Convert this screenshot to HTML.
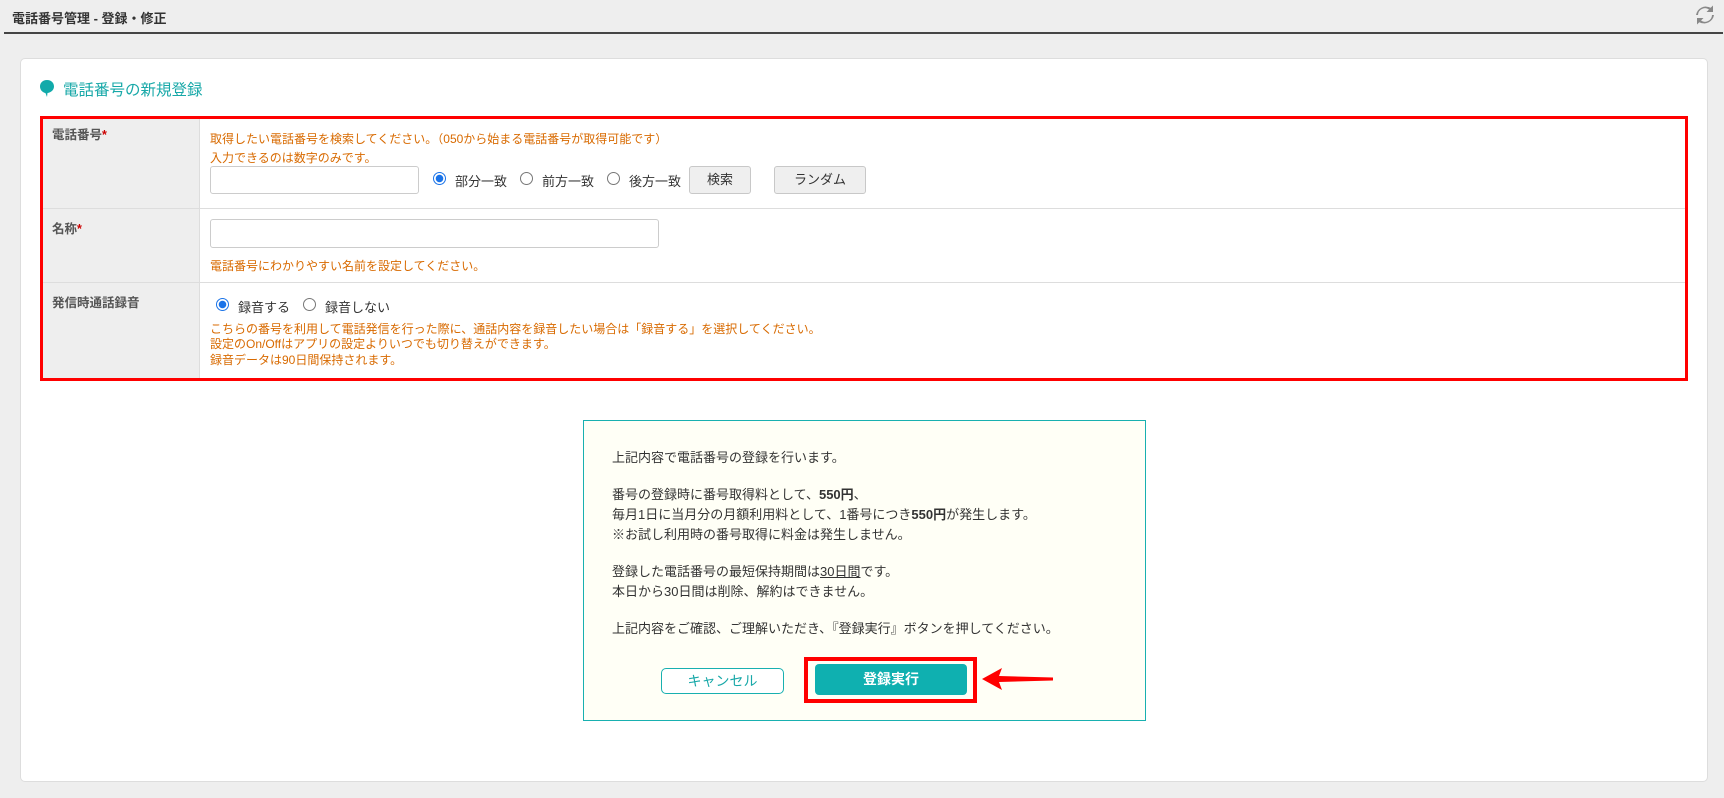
<!DOCTYPE html>
<html><head><meta charset="utf-8"><style>
body{margin:0;width:1724px;height:798px;background:#eeeeee;font-family:"Liberation Sans","Noto Sans CJK JP",sans-serif;position:relative;overflow:hidden;color:#333}
.a{position:absolute}
.t{font-size:12px;color:#333;white-space:nowrap}
.o{color:#d86a00;font-size:12px;white-space:nowrap}
.lbl{font-size:12.5px;font-weight:bold;color:#555;white-space:nowrap}
.in{border:1px solid #ccc;border-radius:3px;background:#fff;box-sizing:border-box}
.rad{width:13px;height:13px;border:1px solid #777;border-radius:50%;box-sizing:border-box;background:#fff}
.rad.on{border:1px solid #1a73e8;background:radial-gradient(circle,#1a73e8 0 3.5px,#fff 4px)}
.btn{border:1px solid #c8c8c8;border-radius:3px;background:#efefef;font-size:13px;text-align:center;box-sizing:border-box;color:#333}
.c{font-size:13px;color:#333;white-space:nowrap}
</style></head><body>
<div class="a" style="left:12px;top:8px;font-size:13px;font-weight:bold;color:#333">電話番号管理 - 登録・修正</div>
<div class="a" style="left:4px;top:32px;width:1719px;height:2px;background:#444"></div>
<svg class="a" style="left:1694px;top:3px" width="22" height="24" viewBox="0 0 22 24"><path d="M4 12a7 7 0 0 1 11-5.5l-2.5 2.5H19V2.5l-2.3 2.3A10 10 0 0 0 2 12z" fill="#888"/><path d="M18 12a7 7 0 0 1-11 5.5l2.5-2.5H3v6.5l2.3-2.3A10 10 0 0 0 20 12z" fill="#888"/></svg>
<div class="a" style="left:20px;top:58px;width:1688px;height:724px;background:#fff;border:1px solid #ddd;border-radius:5px;box-sizing:border-box"></div>
<svg class="a" style="left:39px;top:80px" width="16" height="18" viewBox="0 0 16 18"><path d="M8 0C3.6 0 1 3 1 6.5c0 3.5 2.6 6 5.5 6.6L8 17l.5-4C12 12.5 15 10 15 6.5 15 3 12.4 0 8 0z" fill="#11aaaa"/></svg>
<div class="a" style="left:63px;top:78px;font-size:15.5px;color:#17a8a8">電話番号の新規登録</div>
<div class="a" style="left:40px;top:116px;width:1648px;height:265px;border:3px solid #f00;box-sizing:border-box;background:#fff"></div>
<div class="a" style="left:43px;top:119px;width:157px;height:259px;background:#eeeeee"></div>
<div class="a" style="left:43px;top:208px;width:1642px;height:1px;background:#ddd"></div>
<div class="a" style="left:43px;top:282px;width:1642px;height:1px;background:#ddd"></div>
<div class="a" style="left:199px;top:119px;width:1px;height:259px;background:#ddd"></div>
<div class="a lbl" style="left:52px;top:124px">電話番号<span style="color:#c00">*</span></div>
<div class="a lbl" style="left:52px;top:218px">名称<span style="color:#c00">*</span></div>
<div class="a lbl" style="left:52px;top:292px">発信時通話録音</div>
<div class="a o" style="left:210px;top:130px">取得したい電話番号を検索してください。（050から始まる電話番号が取得可能です）</div>
<div class="a o" style="left:210px;top:149px">入力できるのは数字のみです。</div>
<div class="a in" style="left:210px;top:166px;width:209px;height:28px"></div>
<div class="a rad on" style="left:433px;top:172px"></div><div class="a t" style="left:455px;top:171px;font-size:13px">部分一致</div>
<div class="a rad" style="left:520px;top:172px"></div><div class="a t" style="left:542px;top:171px;font-size:13px">前方一致</div>
<div class="a rad" style="left:607px;top:172px"></div><div class="a t" style="left:629px;top:171px;font-size:13px">後方一致</div>
<div class="a btn" style="left:689px;top:166px;width:62px;height:28px;line-height:26px">検索</div>
<div class="a btn" style="left:774px;top:166px;width:92px;height:28px;line-height:26px">ランダム</div>
<div class="a in" style="left:210px;top:219px;width:449px;height:29px"></div>
<div class="a o" style="left:210px;top:257px">電話番号にわかりやすい名前を設定してください。</div>
<div class="a rad on" style="left:216px;top:298px"></div><div class="a t" style="left:238px;top:297px;font-size:13px">録音する</div>
<div class="a rad" style="left:303px;top:298px"></div><div class="a t" style="left:325px;top:297px;font-size:13px">録音しない</div>
<div class="a o" style="left:210px;top:320px">こちらの番号を利用して電話発信を行った際に、通話内容を録音したい場合は「録音する」を選択してください。</div>
<div class="a o" style="left:210px;top:335px">設定のOn/Offはアプリの設定よりいつでも切り替えができます。</div>
<div class="a o" style="left:210px;top:351px">録音データは90日間保持されます。</div>
<div class="a" style="left:583px;top:420px;width:563px;height:301px;background:#fffff6;border:1px solid #18b0b0;box-sizing:border-box"></div>
<div class="a c" style="left:612px;top:447px">上記内容で電話番号の登録を行います。</div>
<div class="a c" style="left:612px;top:484px">番号の登録時に番号取得料として、<b>550円</b>、</div>
<div class="a c" style="left:612px;top:504px">毎月1日に当月分の月額利用料として、1番号につき<b>550円</b>が発生します。</div>
<div class="a c" style="left:612px;top:524px">※お試し利用時の番号取得に料金は発生しません。</div>
<div class="a c" style="left:612px;top:561px">登録した電話番号の最短保持期間は<u>30日間</u>です。</div>
<div class="a c" style="left:612px;top:581px">本日から30日間は削除、解約はできません。</div>
<div class="a c" style="left:612px;top:618px">上記内容をご確認、ご理解いただき、『登録実行』ボタンを押してください。</div>
<div class="a" style="left:661px;top:668px;width:123px;height:26px;border:1px solid #18b0b0;border-radius:5px;background:#fff;box-sizing:border-box;color:#18a8a8;font-size:14px;text-align:center;line-height:24px">キャンセル</div>
<div class="a" style="left:804px;top:657px;width:173px;height:46px;border:4px solid #f00;box-sizing:border-box"></div>
<div class="a" style="left:815px;top:664px;width:152px;height:31px;background:#0fb0b0;border-radius:4px;color:#fff;font-weight:bold;font-size:14px;text-align:center;line-height:31px">登録実行</div>
<svg class="a" style="left:980px;top:667px" width="76" height="24" viewBox="0 0 76 24"><path d="M2 12L22 1l-3 8 54 1.5v3L19 15l3 8z" fill="#f00"/></svg>
</body></html>
